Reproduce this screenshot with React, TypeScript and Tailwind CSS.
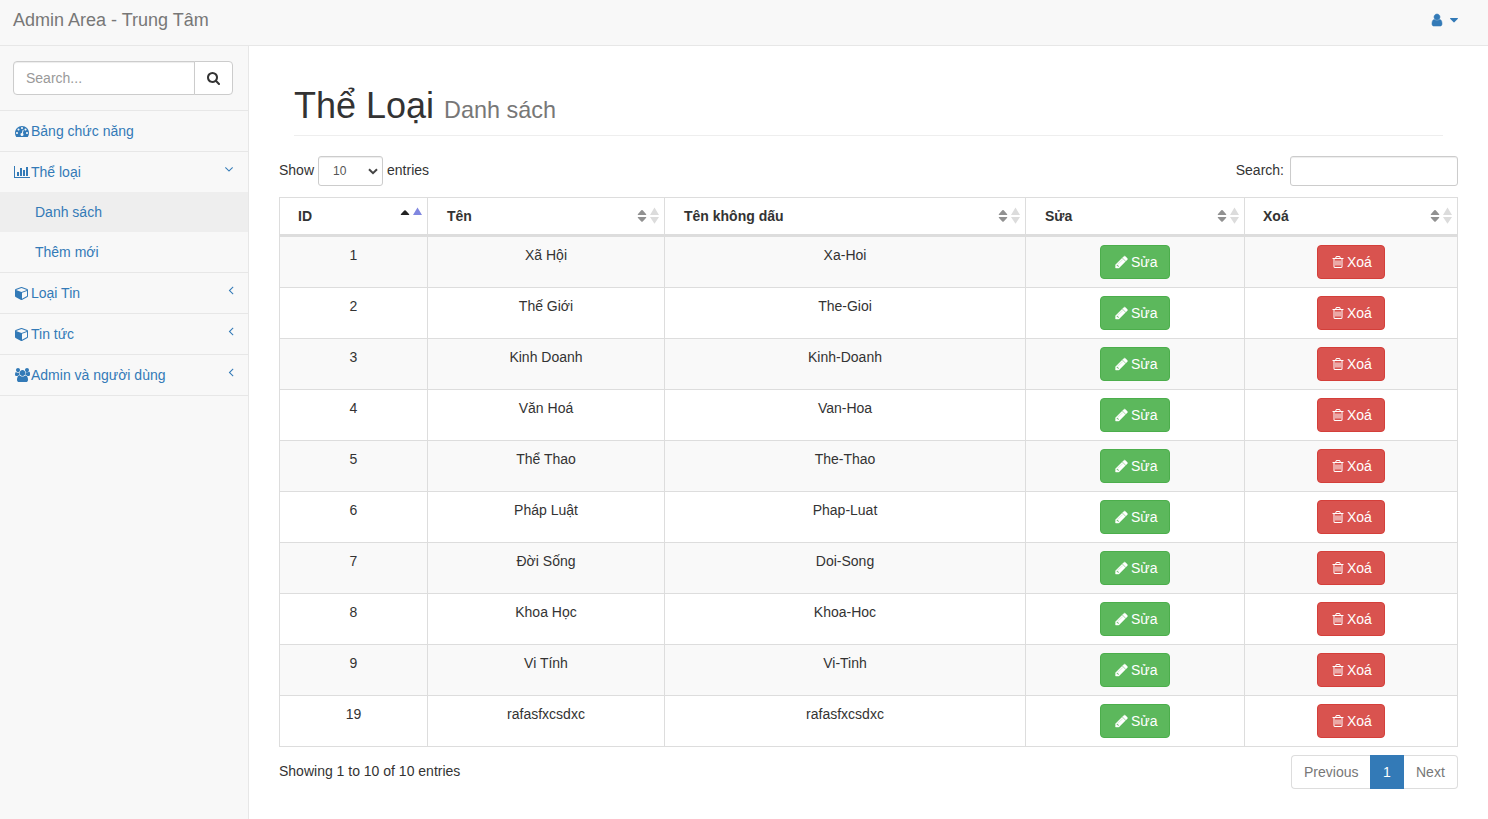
import type { ReactNode } from "react";

const icons = {
  search: {
    w: 1792,
    d: "M1216 832q0-185-131.5-316.5t-316.5-131.5-316.5 131.5-131.5 316.5 131.5 316.5 316.5 131.5 316.5-131.5 131.5-316.5zm512 832q0 52-38 90t-90 38q-54 0-90-38l-343-342q-179 124-399 124-143 0-273.5-55.5t-225-150-150-225-55.5-273.5 55.5-273.5 150-225 225-150 273.5-55.5 273.5 55.5 225 150 150 225 55.5 273.5q0 220-124 399l343 343q37 37 37 90z",
  },
  dashboard: {
    w: 1792,
    d: "M384 1152q0-53-37.5-90.5t-90.5-37.5-90.5 37.5-37.5 90.5 37.5 90.5 90.5 37.5 90.5-37.5 37.5-90.5zm192-448q0-53-37.5-90.5t-90.5-37.5-90.5 37.5-37.5 90.5 37.5 90.5 90.5 37.5 90.5-37.5 37.5-90.5zm428 481l101-382q6-26-7.5-48.5t-38.5-29.5-48 6.5-30 39.5l-101 382q-60 5-107 43.5t-63 98.5q-20 77 20 146t117 89 146-20 89-117q16-60-6-117t-72-91zm660-33q0-53-37.5-90.5t-90.5-37.5-90.5 37.5-37.5 90.5 37.5 90.5 90.5 37.5 90.5-37.5 37.5-90.5zm-640-640q0-53-37.5-90.5t-90.5-37.5-90.5 37.5-37.5 90.5 37.5 90.5 90.5 37.5 90.5-37.5 37.5-90.5zm448 192q0-53-37.5-90.5t-90.5-37.5-90.5 37.5-37.5 90.5 37.5 90.5 90.5 37.5 90.5-37.5 37.5-90.5zm320 448q0 261-141 483-19 29-54 29h-1402q-35 0-54-29-141-221-141-483 0-182 71-348t191-286 286-191 348-71 348 71 286 191 191 286 71 348z",
  },
  chart: {
    w: 2048,
    d: "M640 896v512h-256v-512h256zm384-512v1024h-256v-1024h256zm1024 1152v128h-2048v-1536h128v1408h1920zm-640-896v768h-256v-768h256zm384-384v1152h-256v-1152h256z",
  },
  cube: {
    w: 1792,
    d: "M896 1629l640-349v-636l-640 233v752zm-64-865l698-254-698-254-698 254zm832-252v768q0 35-18 65t-49 47l-704 384q-28 16-61 16t-61-16l-704-384q-31-17-49-47t-18-65v-768q0-40 23-73t61-47l704-256q22-8 44-8t44 8l704 256q38 14 61 47t23 73z",
  },
  users: {
    w: 1920,
    d: "M593 896q-162 5-265 128h-134q-82 0-138-40.5t-56-118.5q0-353 124-353 6 0 43.5 21t97.5 42.5 119 21.5q67 0 133-23-5 37-5 66 0 159 90 306zm1071 637q0 120-73 189.5t-194 69.5h-874q-121 0-194-69.5t-73-189.5q0-53 3.5-103.5t14-109 26.5-108.5 43-97.5 62-81 85.5-53.5 111.5-20q10 0 43 21.5t73 48 107 48 135 21.5 135-21.5 107-48 73-48 43-21.5q61 0 111.5 20t85.5 53.5 62 81 43 97.5 26.5 108.5 14 109 3.5 103.5zm-1024-1277q0 106-75 181t-181 75-181-75-75-181 75-181 181-75 181 75 75 181zm704 384q0 159-112.5 271.5t-271.5 112.5-271.5-112.5-112.5-271.5 112.5-271.5 271.5-112.5 271.5 112.5 112.5 271.5zm576 225q0 78-56 118.5t-138 40.5h-134q-103-123-265-128 90-147 90-306 0-29-5-66 66 23 133 23 59 0 119-21.5t97.5-42.5 43.5-21q124 0 124 353zm-128-609q0 106-75 181t-181 75-181-75-75-181 75-181 181-75 181 75 75 181z",
  },
  user: {
    w: 1792,
    d: "M1536 1399q0 109-62.5 187t-150.5 78h-854q-88 0-150.5-78t-62.5-187q0-85 8.5-160.5t31.5-152 58.5-131 94-89 134.5-34.5q131 128 313 128t313-128q76 0 134.5 34.5t94 89 58.5 131 31.5 152 8.5 160.5zm-256-887q0 159-112.5 271.5t-271.5 112.5-271.5-112.5-112.5-271.5 112.5-271.5 271.5-112.5 271.5 112.5 112.5 271.5z",
  },
  caretDown: {
    w: 1792,
    d: "M1408 704q0 26-19 45l-448 448q-19 19-45 19t-45-19l-448-448q-19-19-19-45t19-45 45-19h896q26 0 45 19t19 45z",
  },
  pencil: {
    w: 1792,
    d: "M491 1536l91-91-235-235-91 91v107h128v128h107zm523-928q0-22-22-22-10 0-17 7l-542 542q-7 7-7 17 0 22 22 22 10 0 17-7l542-542q7-7 7-17zm-54-192l416 416-832 832h-416v-416zm683 96q0 53-37 90l-166 166-416-416 166-165q36-38 90-38 53 0 91 38l235 234q37 39 37 91z",
  },
  trash: {
    w: 1792,
    d: "M704 736v576q0 14-9 23t-23 9h-64q-14 0-23-9t-9-23v-576q0-14 9-23t23-9h64q14 0 23 9t9 23zm256 0v576q0 14-9 23t-23 9h-64q-14 0-23-9t-9-23v-576q0-14 9-23t23-9h64q14 0 23 9t9 23zm256 0v576q0 14-9 23t-23 9h-64q-14 0-23-9t-9-23v-576q0-14 9-23t23-9h64q14 0 23 9t9 23zm128 724v-948h-896v948q0 22 7 40.5t14.5 27 10.5 8.5h832q3 0 10.5-8.5t14.5-27 7-40.5zm-672-1076h448l-48-117q-7-9-17-11h-317q-10 2-17 11zm928 32v64q0 14-9 23t-23 9h-96v948q0 83-47 143.5t-113 60.5h-832q-66 0-113-58.5t-47-141.5v-952h-96q-14 0-23-9t-9-23v-64q0-14 9-23t23-9h309l70-167q15-37 54-63t79-26h320q40 0 79 26t54 63l70 167h309q14 0 23 9t9 23z",
  },
  angleLeft: {
    w: 1792,
    d: "M1203 544q0 13-10 23l-393 393 393 393q10 10 10 23t-10 23l-50 50q-10 10-23 10t-23-10l-466-466q-10-10-10-23t10-23l466-466q10-10 23-10t23 10l50 50q10 10 10 23z",
  },
  angleDown: {
    w: 1792,
    d: "M1395 736q0 13-10 23l-466 466q-10 10-23 10t-23-10l-466-466q-10-10-10-23t10-23l50-50q10-10 23-10t23 10l393 393 393-393q10-10 23-10t23 10l50 50q10 10 10 23z",
  },
};

type IconName = keyof typeof icons;

function Icon({ name, className = "" }: { name: IconName; className?: string }) {
  const { w, d } = icons[name];
  return (
    <svg
      viewBox={`0 0 ${w} 1792`}
      width={w / 128}
      height={14}
      fill="currentColor"
      className={`shrink-0 overflow-visible ${className}`}
    >
      <path d={d} />
    </svg>
  );
}

function FixedIcon({ name, className }: { name: IconName; className?: string }) {
  return (
    <span className="flex w-[18px] shrink-0 justify-center">
      <Icon name={name} className={className} />
    </span>
  );
}

function MenuItem({
  icon,
  label,
  arrow,
  children,
}: {
  icon: IconName;
  label: string;
  arrow?: "angleLeft" | "angleDown";
  children?: ReactNode;
}) {
  return (
    <li className="border-b border-[#e7e7e7]">
      <a className="flex h-10 items-center pr-[13px] pl-[13px]">
        <FixedIcon name={icon} />
        <span className="flex-1">{label}</span>
        {arrow === "angleLeft" && <Icon name="angleLeft" className="-mt-[6px] -mr-[3px]" />}
        {arrow === "angleDown" && <Icon name="angleDown" className="-mt-[6px] -mr-[0.5px]" />}
      </a>
      {children}
    </li>
  );
}

function SortMarks({ active }: { active?: boolean }) {
  if (active) {
    return (
      <svg width="22" height="14" viewBox="0 0 22 14" className="shrink-0 overflow-visible">
        <path d="M.8 5.2 4.3 1.5Q5 .8 5.7 1.5L9.2 5.2Q9.5 6 8.9 6H1.1Q.5 6 .8 5.2Z" fill="#222" />
        <path d="M17.5-1.4 22 6H13Z" fill="#8087e0" />
      </svg>
    );
  }
  return (
    <svg width="22" height="14" viewBox="0 0 22 14" className="shrink-0 overflow-visible">
      <path
        d="M.8 5.2 4.3 1.3Q5 .6 5.7 1.3L9.2 5.2Q9.5 6 8.9 6H1.1Q.5 6 .8 5.2ZM.8 8.8 4.3 12.4Q5 13.1 5.7 12.4L9.2 8.8Q9.5 8 8.9 8H1.1Q.5 8 .8 8.8Z"
        fill="#919191"
      />
      <path d="M17.5-1.4 22 6H13ZM17.5 14.8 22 8H13Z" fill="#dcdcdc" />
    </svg>
  );
}

const columns = [
  { name: "ID", pad: "pl-[18px]" },
  { name: "Tên", pad: "pl-[19px]" },
  { name: "Tên không dấu", pad: "pl-[19px]" },
  { name: "Sửa", pad: "pl-[19px]" },
  { name: "Xoá", pad: "pl-[18px]" },
];

const rows: [number, string, string][] = [
  [1, "Xã Hội", "Xa-Hoi"],
  [2, "Thế Giới", "The-Gioi"],
  [3, "Kinh Doanh", "Kinh-Doanh"],
  [4, "Văn Hoá", "Van-Hoa"],
  [5, "Thể Thao", "The-Thao"],
  [6, "Pháp Luật", "Phap-Luat"],
  [7, "Đời Sống", "Doi-Song"],
  [8, "Khoa Học", "Khoa-Hoc"],
  [9, "Vi Tính", "Vi-Tinh"],
  [19, "rafasfxcsdxc", "rafasfxcsdxc"],
];

const cell = "h-[51px] border-r border-b border-[#ddd] px-2 pt-2 pb-0 text-center align-top";

export default function App() {
  return (
    <div className="flex h-[819px] w-full flex-col overflow-hidden bg-white font-['Liberation_Sans',Arial,sans-serif] text-[14px] leading-5 text-[#333]">
      <header className="flex h-[46px] shrink-0 justify-between border-b border-[#e7e7e7] bg-[#f8f8f8] pr-[27px] pl-[13px]">
        <span className="pt-[10px] text-[18px] text-[#777]">Admin Area - Trung Tâm</span>
        <span className="flex h-10 items-center text-[#337ab7]">
          <FixedIcon name="user" className="stroke-current stroke-[70]" />
          <Icon name="caretDown" className="ml-[1px]" />
        </span>
      </header>

      <div className="flex min-h-0 flex-1">
        <aside className="w-[249px] shrink-0 border-r border-[#e7e7e7] bg-[#f8f8f8] text-[#337ab7]">
          <div className="flex h-[65px] border-b border-[#e7e7e7] pt-[15px] pr-[15px] pl-[13px]">
            <input
              placeholder="Search..."
              className="h-[34px] w-[182px] rounded-l border border-[#ccc] bg-white px-3 shadow-[inset_0_1px_1px_rgba(0,0,0,0.075)] placeholder:text-[#999]"
            />
            <button className="-ml-px flex h-[34px] w-[39px] items-center justify-center rounded-r border border-[#ccc] bg-white text-[#333]">
              <Icon name="search" className="-translate-x-[0.5px]" />
            </button>
          </div>
          <ul>
            <MenuItem icon="dashboard" label="Bảng chức năng" />
            <MenuItem icon="chart" label="Thể loại" arrow="angleDown">
              <div className="flex h-10 items-center bg-[#eee] pl-[35px]">Danh sách</div>
              <div className="flex h-10 items-center pl-[35px]">Thêm mới</div>
            </MenuItem>
            <MenuItem icon="cube" label="Loại Tin" arrow="angleLeft" />
            <MenuItem icon="cube" label="Tin tức" arrow="angleLeft" />
            <MenuItem icon="users" label="Admin và người dùng" arrow="angleLeft" />
          </ul>
        </aside>

        <main className="flex-1 pr-[30px] pl-[30px]">
          <h1 className="mx-[15px] mt-[40px] h-[50px] border-b border-[#eee] text-[36px] leading-[40px]">
            Thể Loại <small className="text-[23.4px] leading-none text-[#777]">Danh sách</small>
          </h1>

          <div className="mt-5 flex h-[30px] justify-between">
            <label className="flex">
              <span className="mt-1">Show</span>
              <span className="relative mx-1 flex">
                <select className="h-[30px] w-[65px] appearance-none rounded-[3px] border border-[#ccc] bg-white pl-[14px] text-[12px] text-[#555] shadow-[inset_0_1px_1px_rgba(0,0,0,0.075)]">
                  <option>10</option>
                </select>
                <svg
                  width="10"
                  height="7"
                  viewBox="0 0 10 7"
                  fill="none"
                  stroke="#444"
                  strokeWidth="2"
                  className="pointer-events-none absolute top-3 right-[5px]"
                >
                  <path d="M1 1.2 5 5.2 9 1.2" />
                </svg>
              </span>
              <span className="mt-1">entries</span>
            </label>
            <label className="flex">
              <span className="mt-1">Search:</span>
              <input className="ml-[6px] h-[30px] w-[168px] rounded-[3px] border border-[#ccc] bg-white px-[10px] text-[12px] shadow-[inset_0_1px_1px_rgba(0,0,0,0.075)]" />
            </label>
          </div>

          <table className="mt-[11px] w-[1179px] table-fixed border-separate border-spacing-0 border-t border-l border-[#ddd]">
            <colgroup>
              <col className="w-[148px]" />
              <col className="w-[237px]" />
              <col className="w-[361px]" />
              <col className="w-[219px]" />
              <col className="w-[213px]" />
            </colgroup>
            <thead>
              <tr>
                {columns.map(({ name, pad }, i) => (
                  <th
                    key={name}
                    className="h-[39px] border-r border-b-[3px] border-[#ddd] p-0 text-left font-bold"
                  >
                    <div className={`flex items-center justify-between pr-[5px] ${pad}`}>
                      {name}
                      <SortMarks active={i === 0} />
                    </div>
                  </th>
                ))}
              </tr>
            </thead>
            <tbody>
              {rows.map(([id, name, slug]) => (
                <tr key={id} className="odd:bg-[#f9f9f9]">
                  <td className={cell}>{id}</td>
                  <td className={cell}>{name}</td>
                  <td className={cell}>{slug}</td>
                  <td className={cell}>
                    <button className="mx-auto flex h-[34px] w-[70px] items-center rounded border border-[#4cae4c] bg-[#5cb85c] pl-3 text-white">
                      <FixedIcon name="pencil" className="-translate-x-[0.4px] stroke-current stroke-[60]" />
                      Sửa
                    </button>
                  </td>
                  <td className={cell}>
                    <button className="mx-auto flex h-[34px] w-[68px] items-center rounded border border-[#d43f3a] bg-[#d9534f] pl-[11px] text-white">
                      <FixedIcon name="trash" />
                      Xoá
                    </button>
                  </td>
                </tr>
              ))}
            </tbody>
          </table>

          <div className="mt-2 flex justify-between">
            <span className="mt-[6px]">Showing 1 to 10 of 10 entries</span>
            <div className="flex h-[34px] text-[#777]">
              <span className="flex w-[79px] items-center rounded-l border border-r-0 border-[#ddd] pl-3">
                Previous
              </span>
              <span className="flex w-[34px] items-center justify-center bg-[#337ab7] text-white">1</span>
              <span className="flex w-[54px] items-center rounded-r border border-l-0 border-[#ddd] pl-3">
                Next
              </span>
            </div>
          </div>
        </main>
      </div>
    </div>
  );
}
